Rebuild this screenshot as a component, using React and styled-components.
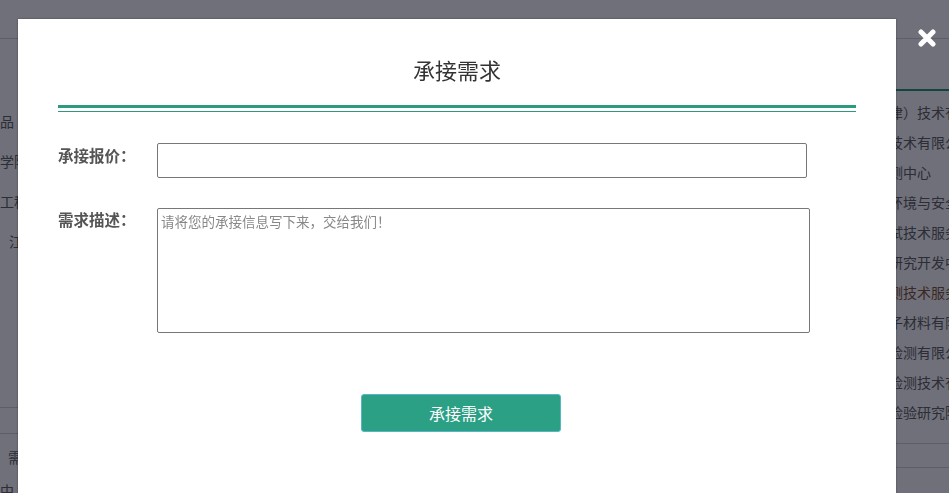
import React from 'react';
import styled, { createGlobalStyle } from 'styled-components';

const GlobalStyle = createGlobalStyle`
  html, body {
    margin: 0;
    padding: 0;
    background: #ffffff;
    font-family: 'Noto Sans CJK SC', 'Noto Sans', sans-serif;
    overflow: hidden;
  }
  * {
    box-sizing: border-box;
  }
`;

// page that lies under the dialog
const Page = styled.div`
  width: 949px;
  height: 493px;
  overflow: hidden;
  color: #666;
  font-size: 14px;
`;

const TopBar = styled.div`
  height: 39px;
  border-bottom: 1px solid #d6d6d6;
`;

const PageBody = styled.div`
  display: flex;
  justify-content: space-between;
`;

const LeftCol = styled.div`
  width: 18px;
  overflow: hidden;
  white-space: nowrap;
  padding-top: 62px;
`;

const LeftItem = styled.div`
  height: 40px;
  line-height: 40px;
  font-size: 14px;
  padding-left: ${(p) => p.$indent || 0}px;
`;

const LeftRule = styled.div`
  margin-top: ${(p) => p.$gap}px;
  height: ${(p) => p.$h}px;
  border-top: 1px solid #d6d6d6;
`;

const LeftSmall = styled.div`
  height: 33px;
  line-height: 33px;
  padding-left: ${(p) => p.$indent || 0}px;
`;

const RightCol = styled.div`
  width: 116px;
  overflow: hidden;
  white-space: nowrap;
`;

const RightTabs = styled.div`
  height: 52px;
  border-bottom: 2px solid #2b9a80;
`;

const RightList = styled.ul`
  list-style: none;
  margin: 0;
  padding: 6px 0 0 0;
`;

const RightItem = styled.li`
  height: 30px;
  line-height: 30px;
  font-size: 14px;
  color: ${(p) => (p.$warm ? '#8a5a3a' : '#666')};
`;

const RightRule = styled.div`
  margin-top: ${(p) => p.$gap}px;
  border-top: 1px solid #d6d6d6;
`;

// dialog layer
const Overlay = styled.div`
  position: fixed;
  inset: 0;
  background: rgba(0, 2, 18, 0.565);
  padding: 19px 0 0 18px;
`;

const Dialog = styled.div`
  width: 878px;
  height: 520px;
  background: #ffffff;
  box-shadow: 0 0 2px rgba(0, 0, 0, 0.35);
  padding: 34px 40px 0 40px;
`;

const Title = styled.h2`
  margin: 0;
  height: 32px;
  line-height: 32px;
  text-align: center;
  font-size: 22px;
  font-weight: normal;
  color: #333;
`;

const DoubleRule = styled.div`
  margin-top: 20px;
  height: 7px;
  border-top: 3px solid #2b9a80;
  border-bottom: 1px solid #2b9a80;
`;

const Form = styled.div`
  display: flex;
  flex-direction: column;
  gap: 30px;
  margin-top: 31px;
`;

const Row = styled.div`
  display: flex;
  align-items: flex-start;
`;

const Label = styled.label`
  width: 99px;
  flex-shrink: 0;
  line-height: ${(p) => p.$lh}px;
  font-size: 15.5px;
  font-weight: bold;
  color: #555;
`;

const TextInput = styled.input`
  width: 650px;
  height: 35px;
  border: 1px solid #777;
  border-radius: 2px;
  padding: 0 6px;
  font-size: 13px;
  font-family: inherit;
  outline: none;
`;

const TextArea = styled.textarea`
  width: 653px;
  height: 125px;
  border: 1px solid #777;
  border-radius: 2px;
  padding: 3px 3px;
  font-size: 13.5px;
  line-height: 18px;
  font-family: inherit;
  resize: none;
  outline: none;

  &::placeholder {
    color: #888;
  }
`;

const ButtonRow = styled.div`
  display: flex;
  justify-content: center;
  padding-left: 8px;
  margin-top: 61px;
`;

const SubmitButton = styled.button`
  width: 200px;
  height: 38px;
  background: #2ca085;
  border: 1px solid #56b6c6;
  border-radius: 3px;
  color: #ffffff;
  font-size: 16px;
  font-family: inherit;
  cursor: pointer;
`;

const CloseButton = styled.button`
  position: absolute;
  top: 29px;
  right: 13px;
  width: 18px;
  height: 18px;
  padding: 0;
  border: none;
  background: none;
  cursor: pointer;

  svg {
    display: block;
  }
`;

const leftItems = [
  { text: '品', indent: 0 },
  { text: '学院', indent: 0 },
  { text: '工程', indent: 0 },
  { text: '江', indent: 9 }
];

const rightItems = [
  { text: '通标（天津）技术有限公司' },
  { text: '华测检测技术有限公司' },
  { text: '天津市检测中心' },
  { text: '天津滨海环境与安全技术' },
  { text: '天津博测试技术服务有限公司' },
  { text: '中国材料研究开发中心' },
  { text: '天津市检测技术服务中心', warm: true },
  { text: '天津光电子材料有限公司' },
  { text: '天津市华检测有限公司' },
  { text: '天津市正检测技术有限公司' },
  { text: '天津产品检验研究院' }
];

const App = () => {
  return (
    <>
      <GlobalStyle />
      <Page>
        <TopBar />
        <PageBody>
          <LeftCol>
            {leftItems.map((item) => (
              <LeftItem key={item.text} $indent={item.indent}>
                {item.text}
              </LeftItem>
            ))}
            <LeftRule $gap={146} $h={26} />
            <LeftRule $gap={0} $h={8} />
            <LeftSmall $indent={8}>需</LeftSmall>
            <LeftSmall $indent={0}>中</LeftSmall>
          </LeftCol>
          <RightCol>
            <RightTabs />
            <RightList>
              {rightItems.map((item) => (
                <RightItem key={item.text} $warm={item.warm}>
                  {item.text}
                </RightItem>
              ))}
            </RightList>
            <RightRule $gap={16} />
            <RightRule $gap={23} />
          </RightCol>
        </PageBody>
      </Page>

      <Overlay>
        <CloseButton aria-label='close'>
          <svg width='18' height='18' viewBox='0 0 18 18'>
            <path
              d='M3 3 L15 15 M15 3 L3 15'
              stroke='#ffffff'
              strokeWidth='5'
              strokeLinecap='round'
              fill='none'
            />
          </svg>
        </CloseButton>
        <Dialog>
          <Title>承接需求</Title>
          <DoubleRule />
          <Form>
            <Row>
              <Label $lh={24}>承接报价：</Label>
              <TextInput type='text' />
            </Row>
            <Row>
              <Label $lh={22}>需求描述：</Label>
              <TextArea placeholder='请将您的承接信息写下来，交给我们！' />
            </Row>
          </Form>
          <ButtonRow>
            <SubmitButton>承接需求</SubmitButton>
          </ButtonRow>
        </Dialog>
      </Overlay>
    </>
  );
};

export default App;
